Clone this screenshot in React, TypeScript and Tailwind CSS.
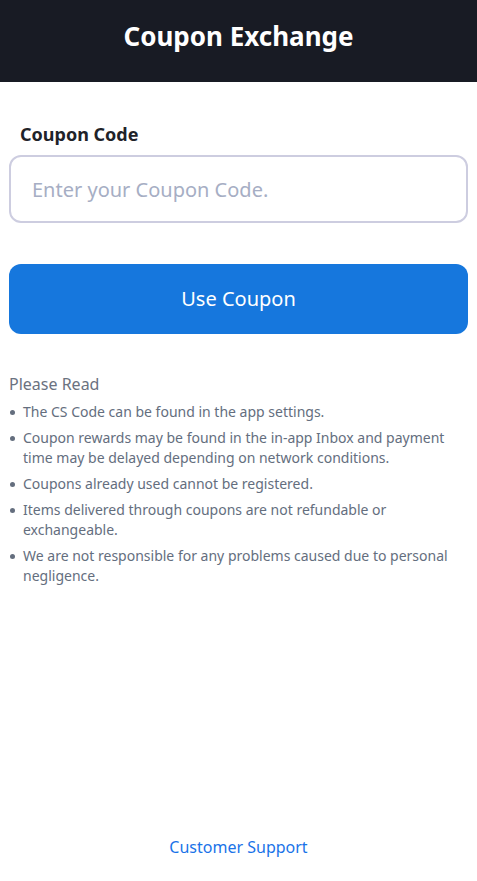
import React from "react";

const items = [
  "The CS Code can be found in the app settings.",
  "Coupon rewards may be found in the in-app Inbox and payment time may be delayed depending on network conditions.",
  "Coupons already used cannot be registered.",
  "Items delivered through coupons are not refundable or exchangeable.",
  "We are not responsible for any problems caused due to personal negligence.",
];

export default function App() {
  return (
    <div
      className="min-h-[881px] flex flex-col bg-white"
      style={{ fontFamily: '"Noto Sans", "Open Sans", sans-serif' }}
    >
      <header className="h-[82px] bg-[#181b24] flex items-center justify-center pb-[11px]">
        <h1 className="text-white text-[26px] font-bold leading-none">Coupon Exchange</h1>
      </header>
      <main className="flex-1 flex flex-col px-[9px]">
        <label className="mt-[40px] ml-[11px] text-[18px] leading-[24px] font-bold text-[#1f2329]">
          Coupon Code
        </label>
        <input
          className="mt-[9px] h-[68px] w-full rounded-[12px] border-2 border-[#cdcde0] px-[21px] text-[20px] text-[#333] placeholder:text-[#a6aec4] outline-none"
          placeholder="Enter your Coupon Code."
        />
        <button className="mt-[41px] h-[70px] w-full rounded-[12px] bg-[#1677dd] text-white text-[20px]">
          Use Coupon
        </button>
        <h2 className="mt-[39px] text-[16px] leading-[22px] text-[#6b7280]">Please Read</h2>
        <ul className="mt-[7px] flex flex-col gap-[6px]">
          {items.map((t) => (
            <li key={t} className="flex text-[14px] leading-[20px] text-[#646e7e]">
              <span className="w-[14px] shrink-0 flex pt-[8px] pl-[1px]">
                <span className="w-[5px] h-[5px] rounded-full bg-[#646e7e]" />
              </span>
              <span className="pr-[20px]">{t}</span>
            </li>
          ))}
        </ul>
        <div className="flex-1" />
        <div className="pb-[22px] text-center">
          <a className="text-[16px] leading-[22px] text-[#1a73e8]">Customer Support</a>
        </div>
      </main>
    </div>
  );
}
